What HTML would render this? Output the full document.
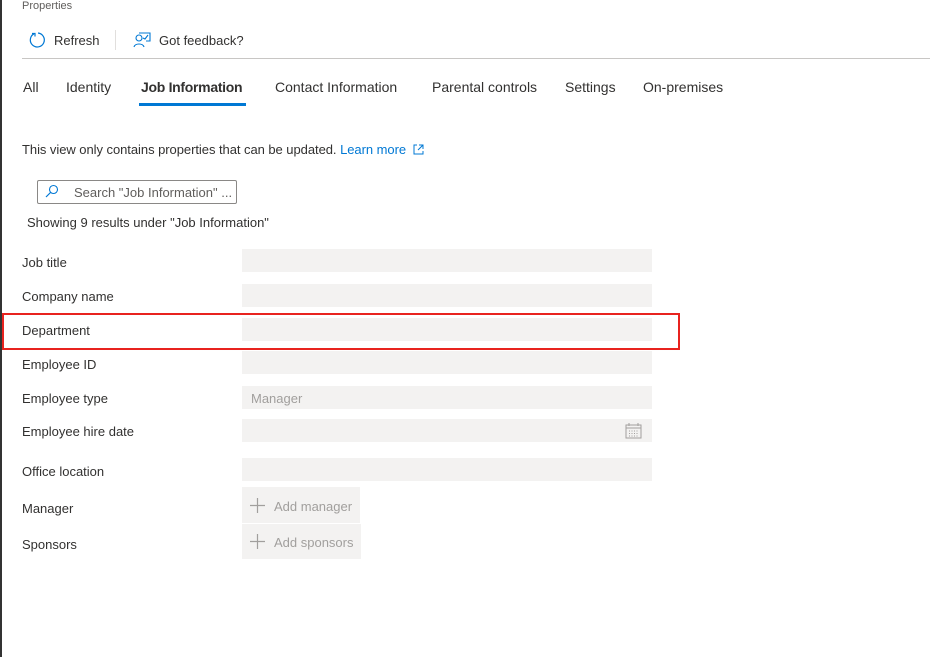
<!DOCTYPE html>
<html><head><style>
body{margin:0;width:930px;height:657px;background:#fff;font-family:"Liberation Sans",sans-serif;color:#323130;position:relative;overflow:hidden}
.a{position:absolute;white-space:nowrap}
.lbl{position:absolute;left:22px;font-size:13px}
.inp{position:absolute;left:242px;width:410px;height:23px;background:#f3f2f1}
.tab{position:absolute;top:79px;font-size:14px}
</style></head><body>
<div class="a" style="left:0;top:0;width:2px;height:657px;background:#333"></div>
<div class="a" style="left:22px;top:0;font-size:11px;color:#605e5c">Properties</div>
<svg class="a" style="left:29px;top:31px" width="18" height="18" viewBox="0 0 18 18"><path d="M5 2.8A7 7 0 1 0 9 2" fill="none" stroke="#0078d4" stroke-width="1.2"/><path d="M3 2.5h3v3" fill="none" stroke="#0078d4" stroke-width="1.2"/></svg>
<div class="a" style="left:54px;top:33px;font-size:13px">Refresh</div>
<div class="a" style="left:115px;top:30px;width:1px;height:20px;background:#e1dfdd"></div>
<svg class="a" style="left:133px;top:31px" width="18" height="18" viewBox="0 0 18 18"><circle cx="6" cy="7" r="3" fill="none" stroke="#0078d4" stroke-width="1.1"/><path d="M1 16c1-4 9-4 10 0M6 2h11v8h-4" fill="none" stroke="#0078d4" stroke-width="1.1"/><path d="M10 7l2 1 3-4" fill="none" stroke="#0078d4" stroke-width="1.1"/></svg>
<div class="a" style="left:159px;top:33px;font-size:13px">Got feedback?</div>
<div class="a" style="left:22px;top:58px;width:908px;height:1px;background:#c8c6c4"></div>
<div class="tab" style="left:23px">All</div>
<div class="tab" style="left:66px">Identity</div>
<div class="tab" style="left:141px;font-weight:bold;letter-spacing:-0.3px">Job Information</div>
<div class="a" style="left:139px;top:103px;width:107px;height:3px;background:#0078d4"></div>
<div class="tab" style="left:275px">Contact Information</div>
<div class="tab" style="left:432px">Parental controls</div>
<div class="tab" style="left:565px">Settings</div>
<div class="tab" style="left:643px">On-premises</div>
<div class="a" style="left:22px;top:142px;font-size:13px;letter-spacing:-0.05px">This view only contains properties that can be updated. <span style="color:#0078d4">Learn more</span></div>
<svg class="a" style="left:413px;top:144px" width="11" height="11" viewBox="0 0 11 11"><path d="M4 1H1v9h9V7M6 1h4v4M10 1L5 6" fill="none" stroke="#0078d4" stroke-width="1"/></svg>
<div class="a" style="left:37px;top:180px;width:198px;height:22px;border:1px solid #8a8886;border-radius:2px"></div>
<svg class="a" style="left:45px;top:184px" width="14" height="14" viewBox="0 0 14 14"><circle cx="8.5" cy="5.5" r="4" fill="none" stroke="#0078d4" stroke-width="1.1"/><path d="M5.5 8.5L1 13" stroke="#0078d4" stroke-width="1.2"/></svg>
<div class="a" style="left:74px;top:185px;font-size:13px;color:#605e5c">Search "Job Information" ...</div>
<div class="a" style="left:27px;top:215px;font-size:13px">Showing 9 results under "Job Information"</div>
<div class="lbl" style="top:255px">Job title</div><div class="inp" style="top:249px"></div>
<div class="lbl" style="top:289px">Company name</div><div class="inp" style="top:284px"></div>
<div class="lbl" style="top:323px">Department</div><div class="inp" style="top:318px"></div>
<div class="a" style="left:2px;top:313px;width:674px;height:33px;border:2px solid #e8231f"></div>
<div class="lbl" style="top:357px">Employee ID</div><div class="inp" style="top:351px"></div>
<div class="lbl" style="top:391px">Employee type</div><div class="inp" style="top:386px"><span class="a" style="left:9px;top:5px;font-size:13px;color:#a19f9d">Manager</span></div>
<div class="lbl" style="top:424px">Employee hire date</div><div class="inp" style="top:419px"><svg class="a" style="left:383px;top:4px" width="17" height="16" viewBox="0 0 17 16"><rect x="1" y="2" width="15" height="13" fill="none" stroke="#a19f9d"/><path d="M1 5h15M4 0v3M13 0v3" stroke="#a19f9d"/><path d="M4 8h10M4 10.5h10M4 13h10" stroke="#a19f9d" stroke-dasharray="1 1.5"/></svg></div>
<div class="lbl" style="top:464px">Office location</div><div class="inp" style="top:458px"></div>
<div class="lbl" style="top:501px">Manager</div>
<div class="a" style="left:242px;top:487px;width:118px;height:36px;background:#f3f2f1"><svg class="a" style="left:8px;top:11px" width="15" height="15" viewBox="0 0 15 15"><path d="M7.5 0v15M0 7.5h15" stroke="#a19f9d" stroke-width="1.2"/></svg><span class="a" style="left:32px;top:12px;font-size:13px;color:#a19f9d">Add manager</span></div>
<div class="lbl" style="top:537px">Sponsors</div>
<div class="a" style="left:242px;top:524px;width:119px;height:35px;background:#f3f2f1"><svg class="a" style="left:8px;top:10px" width="15" height="15" viewBox="0 0 15 15"><path d="M7.5 0v15M0 7.5h15" stroke="#a19f9d" stroke-width="1.2"/></svg><span class="a" style="left:32px;top:11px;font-size:13px;color:#a19f9d">Add sponsors</span></div>
</body></html>
